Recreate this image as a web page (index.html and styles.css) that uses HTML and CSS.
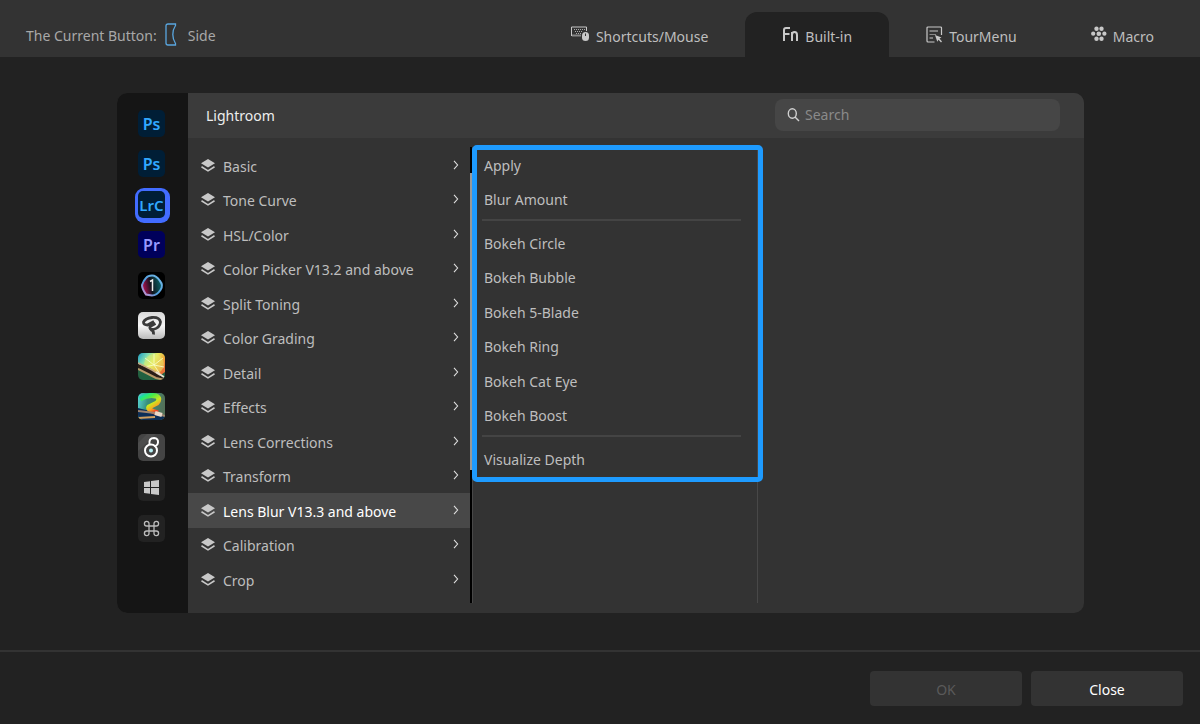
FILE: index.html
```html
<!DOCTYPE html>
<html lang="en">
  <head>
    <meta charset="UTF-8" />
    <meta name="viewport" content="width=device-width, initial-scale=1.0" />
    <title>Built-in</title>
    <link rel="stylesheet" href="styles.css">
  </head>
  <body>
    <!-- shared symbols -->
    <svg class="defs" aria-hidden="true">
      <symbol id="layers" viewBox="0 0 14 13">
        <path d="M7 0L14 4.200L7 8.600L0 4.200Z" fill="#c8c8c8" />
        <path d="M0.500 7.800L7 11.900L13.500 7.800" fill="none" stroke="#c8c8c8" stroke-width="1.600" />
      </symbol>
      <symbol id="chevron" viewBox="0 0 6 10">
        <path d="M1 0.8L4.6 5L1 9.2" fill="none" stroke="#e0e0e0" stroke-width="1.1" />
      </symbol>
    </svg>

    <header class="topbar">
      <div class="current">
        <span>The Current Button:</span>
        <svg width="12" height="23" viewBox="0 0 12 23" fill="none" stroke="#5aa7e0" stroke-width="1.3">
          <path d="M10.5 1H3Q1 1 1 3V20Q1 22 3 22H10.5V20.5Q7.8 16.500 7.800 11.500Q7.800 6.500 10.500 2.500Z" />
        </svg>
        <span>Side</span>
      </div>
      <nav class="tabs">
        <a href="#shortcuts" class="tab">
          <svg width="19" height="16" viewBox="0 0 19 16">
            <path d="M0.500 10V1H15.500V5" fill="none" stroke="#c8c8c8" />
            <path d="M3 3.500H14M4 5.500H12M5 7.500H10" stroke="#aaa" stroke-dasharray="1 1" />
            <path d="M1 9.500H10" stroke="#888" stroke-width="2" />
            <rect x="11" y="6" width="7" height="9" rx="3.500" fill="#c8c8c8" />
            <path d="M14.500 7.500V10" stroke="#333" />
          </svg>
          <span>Shortcuts/Mouse</span>
        </a>
        <a href="#builtin" class="tab active">
          <svg width="17" height="16" viewBox="0 0 17 16" fill="none" stroke="#c8c8c8" stroke-width="2">
            <path d="M2 15V4Q2 2 4 2H8M2 8H7.500" />
            <path d="M10 15V6M10 9Q10 6 12.500 6Q15 6 15 9V15" />
          </svg>
          <span>Built-in</span>
        </a>
        <a href="#tourmenu" class="tab">
          <svg width="17" height="17" viewBox="0 0 17 17">
            <path d="M15.500 9V2Q15.500 1 14.500 1H2Q1 1 1 2V15Q1 16 2 16H8.500" fill="none" stroke="#c8c8c8" stroke-width="1.200" />
            <path d="M3.500 5H12M3.500 12H7" stroke="#c8c8c8" stroke-width="1.200" />
            <path d="M3.500 8.500H10" stroke="#888" />
            <path d="M9 9L15.500 11.500L13.500 12.500L16 15.500L15 16.500L12.500 13.800L11.300 15.800Z" fill="#c8c8c8" />
          </svg>
          <span>TourMenu</span>
        </a>
        <a href="#macro" class="tab">
          <svg width="16" height="16" viewBox="0 0 16 16" fill="#c8c8c8">
            <circle cx="5.500" cy="2.700" r="2.200" /><circle cx="10.500" cy="2.700" r="2.200" />
            <circle cx="2.200" cy="7.700" r="2.100" /><circle cx="7.800" cy="7.700" r="2.300" /><circle cx="13.400" cy="7.700" r="2.100" />
            <circle cx="5.500" cy="12.700" r="2.200" /><circle cx="10.500" cy="12.700" r="2.200" />
          </svg>
          <span>Macro</span>
        </a>
      </nav>
    </header>

    <main class="content">
      <section class="panel">
        <aside class="apps">
          <button type="button" class="app ps" aria-label="Photoshop">Ps</button>
          <button type="button" class="app ps" aria-label="Photoshop beta">Ps</button>
          <button type="button" class="app lrc selected" aria-label="Lightroom">LrC</button>
          <button type="button" class="app pr" aria-label="Premiere">Pr</button>
          <button type="button" class="app" aria-label="Capture One">
            <svg width="27" height="27" viewBox="0 0 27 27">
              <defs>
                <linearGradient id="c1" x1="0" y1="0.600" x2="1" y2="0.400">
                  <stop offset="0" stop-color="#c01058" /><stop offset="0.450" stop-color="#10131c" /><stop offset="1" stop-color="#08686c" />
                </linearGradient>
                <linearGradient id="c2" x1="0" y1="1" x2="1" y2="0">
                  <stop offset="0" stop-color="#e08cc8" /><stop offset="0.400" stop-color="#4c9cdc" /><stop offset="1" stop-color="#78bce8" />
                </linearGradient>
              </defs>
              <rect width="27" height="27" rx="5" fill="#000" />
              <path d="M14 3.500C18 3.500 20 6 22 9C24.500 12 24.500 15 22.500 18C20.500 21 18 23.500 14 23.500L8 22.500C6.500 20 4 17 4 13C5 10 6 8 8 6Q10 3.500 14 3.500Z" fill="url(#c1)" stroke="url(#c2)" stroke-width="2" />
              <path d="M12 9.500L14.500 8V19" fill="none" stroke="#eee" stroke-width="1.500" />
            </svg>
          </button>
          <button type="button" class="app" aria-label="Clip Studio">
            <svg width="27" height="27" viewBox="0 0 27 27">
              <defs>
                <linearGradient id="s1" x1="0" y1="0" x2="0" y2="1">
                  <stop offset="0" stop-color="#d8d8d8" /><stop offset="0.500" stop-color="#f6f6f6" /><stop offset="1" stop-color="#bbb" />
                </linearGradient>
              </defs>
              <rect width="27" height="27" rx="5" fill="url(#s1)" />
              <path d="M16 9.500L9.500 13Q5.500 13 5.500 10Q7 6.500 14 5.500Q21.500 5 22.500 10Q22 16 15 17.500Q11 17.500 12 14.500L17.500 11.500M12 17.500Q16 18 15.500 22.500" fill="none" stroke="#3a3a3a" stroke-width="2.800" stroke-linejoin="round" />
            </svg>
          </button>
          <button type="button" class="app" aria-label="Painter">
            <svg width="27" height="27" viewBox="0 0 27 27">
              <defs>
                <linearGradient id="p1" x1="0" y1="0" x2="1" y2="0.600">
                  <stop offset="0" stop-color="#1898c8" /><stop offset="0.300" stop-color="#80dcb0" /><stop offset="0.550" stop-color="#e8ec60" /><stop offset="0.800" stop-color="#f0a838" /><stop offset="1" stop-color="#e87038" />
                </linearGradient>
                <clipPath id="tile"><rect width="27" height="27" rx="5" /></clipPath>
              </defs>
              <g clip-path="url(#tile)">
                <rect width="27" height="27" fill="#226040" />
                <path d="M0 0H27V19L20 24L0 11Z" fill="url(#p1)" />
                <circle cx="16" cy="11" r="10" fill="#e4f070" fill-opacity="0.500" />
                <path d="M16 1V12L7 5M16 12L25 5M16 12L26 14M16 12L22 21M16 12L6 14" fill="none" stroke="#f8ffd0" stroke-width="0.800" />
                <path d="M0 11L13 16L27 26V27H23L10 20L0 15Z" fill="#291d18" />
                <path d="M0 10L14 17L22 22" stroke="#c8a880" stroke-width="1.500" fill="none" />
                <path d="M0 16L18 25L27 27" stroke="#b89868" stroke-width="2" fill="none" />
                <path d="M18 19L26 24" stroke="#e8e0d0" stroke-width="2" />
              </g>
            </svg>
          </button>
          <button type="button" class="app" aria-label="Painter beta">
            <svg width="27" height="27" viewBox="0 0 27 27">
              <defs>
                <linearGradient id="w1" x1="0" y1="0" x2="0.700" y2="1">
                  <stop offset="0" stop-color="#08e0c0" /><stop offset="0.300" stop-color="#48ec48" /><stop offset="0.600" stop-color="#c8e820" /><stop offset="0.800" stop-color="#f8a820" /><stop offset="1" stop-color="#f04028" />
                </linearGradient>
                <linearGradient id="w2" x1="0" y1="0" x2="1" y2="0.200">
                  <stop offset="0" stop-color="#58d8d8" /><stop offset="0.400" stop-color="#38907c" /><stop offset="1" stop-color="#527058" />
                </linearGradient>
              </defs>
              <g clip-path="url(#tile)">
                <rect width="27" height="27" fill="url(#w2)" />
                <path d="M0 15L12 18L27 24V27H0Z" fill="#0b2e58" />
                <path d="M2 6Q10 1 18 3Q23 5 19 10L11 14Q9 17 20 20" fill="none" stroke="url(#w1)" stroke-width="5" />
                <path d="M0 18L17 20L27 23" fill="none" stroke="#9c8470" stroke-width="2" />
                <path d="M0 25L17 24" stroke="#d0a060" stroke-width="2" />
                <path d="M17 20L24 22" stroke="#e8d8c8" stroke-width="4" />
              </g>
            </svg>
          </button>
          <button type="button" class="app" aria-label="Topaz">
            <svg width="27" height="27" viewBox="0 0 27 27" fill="none" stroke="#fff" stroke-width="2">
              <rect width="27" height="27" rx="5" fill="#444" stroke="none" />
              <path d="M0 9L9 0H18L0 17Z" fill="#4d4d4d" stroke="none" />
              <circle cx="13" cy="16.500" r="6" />
              <path d="M11.500 10.500Q10.500 4 16 4Q20.500 4.500 20 8.500Q19.500 12 16 12" />
              <circle cx="13" cy="16.500" r="2" fill="#b8f0f4" stroke="none" />
            </svg>
          </button>
          <button type="button" class="app" aria-label="Windows">
            <svg width="27" height="27" viewBox="0 0 27 27">
              <rect width="27" height="27" rx="5" fill="#222" />
              <path d="M6 8L12 7.200V13H6ZM13 7L21 6V13H13ZM6 14H12V19.800L6 19ZM13 14H21V21L13 20Z" fill="#c8c8c8" />
            </svg>
          </button>
          <button type="button" class="app" aria-label="Mac">
            <svg width="27" height="27" viewBox="0 0 27 27">
              <rect width="27" height="27" rx="5" fill="#222" />
              <path d="M11 8.500A2.300 2.300 0 1 0 8.700 11H18.300A2.300 2.300 0 1 0 16 8.500V18.500A2.300 2.300 0 1 0 18.300 16H8.700A2.300 2.300 0 1 0 11 18.500Z" fill="none" stroke="#bbb" stroke-width="1.300" />
            </svg>
          </button>
        </aside>

        <div class="browser">
          <div class="browser-head">
            <h1>Lightroom</h1>
            <label class="search">
              <svg width="13" height="14" viewBox="0 0 13 14" fill="none" stroke="#d0d0d0" stroke-width="1.400">
                <ellipse cx="5.300" cy="5.500" rx="4" ry="4.700" />
                <path d="M8 9L12 13" />
              </svg>
              <input type="search" placeholder="Search" aria-label="Search" />
            </label>
          </div>
          <div class="columns">
            <div class="column groups">
              <ul class="list">
                <li><a href="#basic"><svg class="layers"><use href="#layers" /></svg>Basic<svg class="chevron"><use href="#chevron" /></svg></a></li>
                <li><a href="#tone"><svg class="layers"><use href="#layers" /></svg>Tone Curve<svg class="chevron"><use href="#chevron" /></svg></a></li>
                <li><a href="#hsl"><svg class="layers"><use href="#layers" /></svg>HSL/Color<svg class="chevron"><use href="#chevron" /></svg></a></li>
                <li><a href="#picker"><svg class="layers"><use href="#layers" /></svg>Color Picker V13.2 and above<svg class="chevron"><use href="#chevron" /></svg></a></li>
                <li><a href="#split"><svg class="layers"><use href="#layers" /></svg>Split Toning<svg class="chevron"><use href="#chevron" /></svg></a></li>
                <li><a href="#grading"><svg class="layers"><use href="#layers" /></svg>Color Grading<svg class="chevron"><use href="#chevron" /></svg></a></li>
                <li><a href="#detail"><svg class="layers"><use href="#layers" /></svg>Detail<svg class="chevron"><use href="#chevron" /></svg></a></li>
                <li><a href="#effects"><svg class="layers"><use href="#layers" /></svg>Effects<svg class="chevron"><use href="#chevron" /></svg></a></li>
                <li><a href="#corrections"><svg class="layers"><use href="#layers" /></svg>Lens Corrections<svg class="chevron"><use href="#chevron" /></svg></a></li>
                <li><a href="#transform"><svg class="layers"><use href="#layers" /></svg>Transform<svg class="chevron"><use href="#chevron" /></svg></a></li>
                <li class="selected"><a href="#blur"><svg class="layers"><use href="#layers" /></svg>Lens Blur V13.3 and above<svg class="chevron"><use href="#chevron" /></svg></a></li>
                <li><a href="#calibration"><svg class="layers"><use href="#layers" /></svg>Calibration<svg class="chevron"><use href="#chevron" /></svg></a></li>
                <li><a href="#crop"><svg class="layers"><use href="#layers" /></svg>Crop<svg class="chevron"><use href="#chevron" /></svg></a></li>
              </ul>
              <div class="scrollbar"><div class="thumb"></div></div>
            </div>
            <div class="column commands">
              <div class="marked">
                <ul class="list">
                  <li><a href="#apply">Apply</a></li>
                  <li><a href="#amount">Blur Amount</a></li>
                </ul>
                <hr />
                <ul class="list">
                  <li><a href="#circle">Bokeh Circle</a></li>
                  <li><a href="#bubble">Bokeh Bubble</a></li>
                  <li><a href="#blade">Bokeh 5-Blade</a></li>
                  <li><a href="#ring">Bokeh Ring</a></li>
                  <li><a href="#cateye">Bokeh Cat Eye</a></li>
                  <li><a href="#boost">Bokeh Boost</a></li>
                </ul>
                <hr />
                <ul class="list">
                  <li><a href="#depth">Visualize Depth</a></li>
                </ul>
              </div>
            </div>
            <div class="column"></div>
          </div>
        </div>
      </section>
    </main>

    <footer class="actions">
      <button type="button" class="btn" disabled>OK</button>
      <button type="button" class="btn">Close</button>
    </footer>
  </body>
</html>
```
FILE: styles.css
```css
* {
  box-sizing: border-box;
}
body {
  display: flex;
  flex-direction: column;
  min-height: 100vh;
  margin: 0;
  background-color: #222;
  color: #bebebe;
  font-family: "Noto Sans", "Open Sans", sans-serif;
  font-size: 14px;
  line-height: 20px;
}
a {
  color: inherit;
  text-decoration: none;
}
button,
input {
  font: inherit;
}
svg {
  flex: none;
}
.defs {
  display: none;
}

/* top bar */
.topbar {
  display: flex;
  justify-content: space-between;
  height: 57px;
  padding: 12px 9px 0 26px;
  background-color: #333;
}
.current {
  display: flex;
  align-items: center;
  gap: 8px;
  padding-top: 2px;
  color: #a8a8a8;
}
.current svg {
  margin-bottom: 2px;
}
.current span:last-child {
  padding-left: 3px;
}
.tabs {
  display: flex;
}
.tab {
  display: flex;
  align-items: center;
  gap: 6px;
  padding: 5px 37px 0;
  border-radius: 12px 12px 0 0;
}
.tab svg {
  margin-bottom: 6px;
}
.tab.active {
  background-color: #222;
}

/* main panel */
.content {
  flex: 1;
  padding: 36px 116px 37px 117px;
}
.panel {
  display: flex;
  min-height: 520px;
  border-radius: 10px;
  overflow: hidden;
  background-color: #333;
}
.apps {
  display: flex;
  flex-direction: column;
  align-items: center;
  width: 71px;
  padding: 17px 2px 0 0;
  background-color: #151515;
}
.app {
  display: block;
  width: 27px;
  height: 27px;
  margin-bottom: 13px;
  padding: 0;
  border: 0;
  border-radius: 5px;
  background: none;
  font-size: 16px;
  font-weight: 600;
  line-height: 24px;
  text-align: center;
}
.app:nth-child(even) {
  margin-bottom: 14px;
}
.app svg {
  display: block;
}
.ps {
  background-color: #001e36;
  color: #31a8ff;
}
.lrc {
  background-color: #001e36;
  color: #31a8ff;
  font-size: 15px;
}
.pr {
  background-color: #00005b;
  color: #9999ff;
}
.app.selected {
  box-shadow: 1px 1px 0 4px #426cff;
}

.browser {
  display: flex;
  flex: 1;
  flex-direction: column;
}
.browser-head {
  display: flex;
  align-items: center;
  justify-content: space-between;
  height: 45px;
  padding: 0 24px 0 18px;
  background-color: #3b3b3b;
}
h1 {
  margin: 0;
  color: #eee;
  font-size: 14px;
  font-weight: 400;
}
.search {
  display: flex;
  align-items: center;
  gap: 5px;
  width: 285px;
  height: 32px;
  margin-bottom: 2px;
  padding: 0 12px;
  border-radius: 8px;
  background-color: #464646;
}
.search input {
  width: 100%;
  padding: 0;
  border: 0;
  outline: 0;
  background: none;
  color: #ddd;
}
.search input::placeholder {
  color: #8a8a8a;
}

/* columns */
.columns {
  display: grid;
  flex: 1;
  grid-template-columns: 284fr 285fr 327fr;
  padding: 9px 0 10px;
}
.column {
  border-left: 1px solid #484848;
}
.groups {
  display: flex;
  border: 0;
}
.groups .list {
  flex: 1;
}
.list {
  margin: 0;
  padding: 1px 0 0;
  list-style: none;
}
.list a {
  display: flex;
  align-items: center;
  height: 35px;
}
.list li:nth-child(even) a {
  height: 34px;
}
.groups a {
  padding: 2px 11px 0 13px;
}
.layers {
  width: 14px;
  height: 13px;
  margin: 0 8px 3px 0;
}
.chevron {
  width: 6px;
  height: 10px;
  margin: 0 0 4px auto;
}
.list .selected {
  background-color: #484848;
  color: #fff;
}
.scrollbar {
  width: 2px;
  padding-top: 26px;
  background-color: #000;
}
.thumb {
  height: 69%;
  background-color: #999;
}

.marked {
  position: relative;
  padding-left: 11px;
}
.marked .list + hr + .list {
  padding-top: 0;
}
/* frame drawn over the column edges */
.marked::after {
  content: "";
  position: absolute;
  inset: -2px -6px -5px -1px;
  border: 5px solid #1e9bff;
  border-radius: 5px;
  pointer-events: none;
}
hr {
  height: 2px;
  margin: 2px 16px 5px -2px;
  border: 0;
  background-color: #444;
}

/* bottom buttons */
.actions {
  display: flex;
  justify-content: flex-end;
  gap: 9px;
  padding: 19px 17px 18px;
  border-top: 2px solid #333;
}
.btn {
  width: 152px;
  height: 35px;
  padding: 2px 0 0;
  border: 0;
  border-radius: 4px;
  background-color: #333;
  color: #fff;
}
.btn:disabled {
  color: #5a5a5a;
}
```
